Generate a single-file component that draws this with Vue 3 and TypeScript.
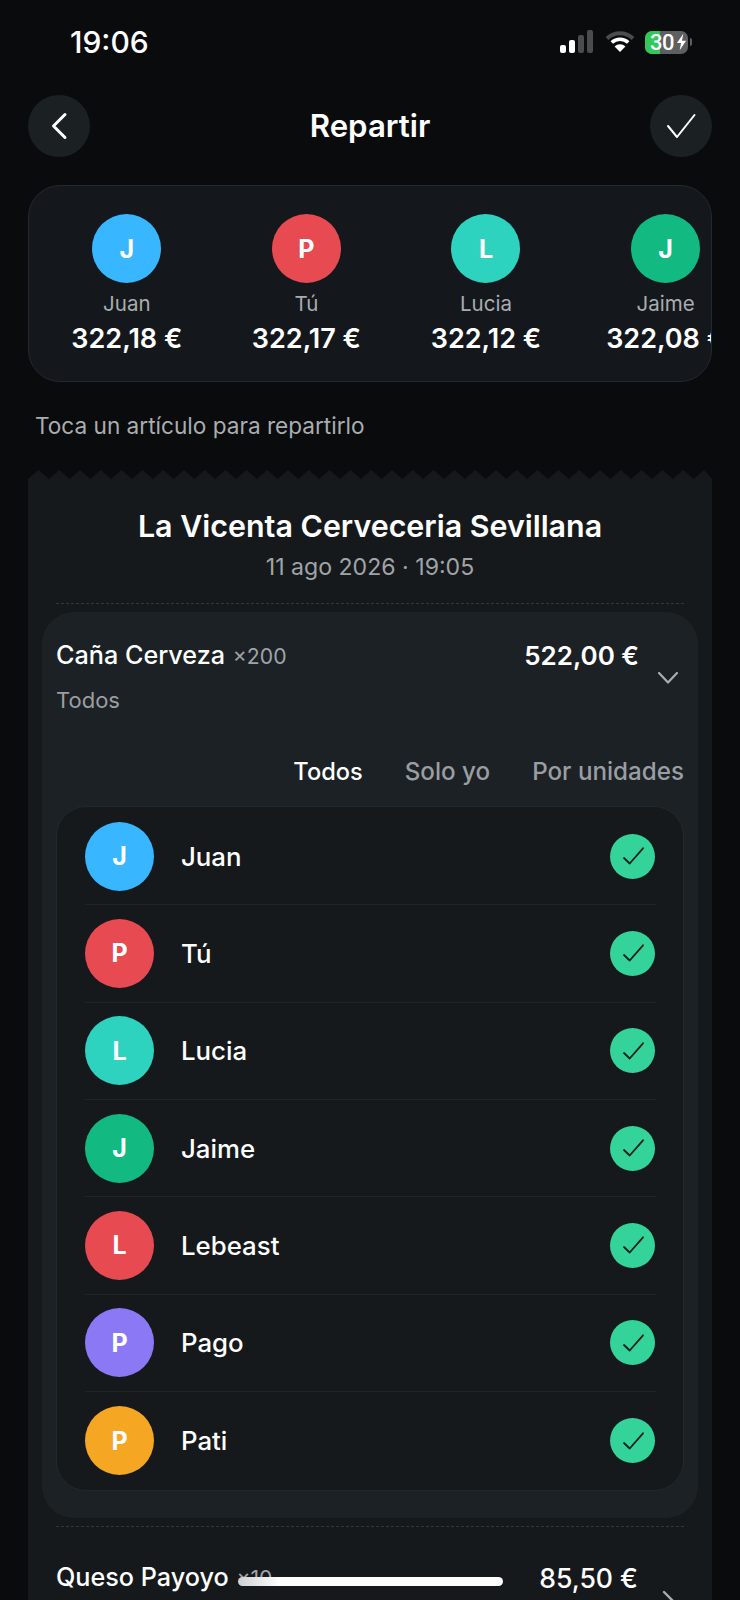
<script setup lang="ts">
interface Person { initial: string; name: string; color: string; amount: string }

const people: Person[] = [
  { initial: 'J', name: 'Juan', color: '#38b6ff', amount: '322,18 €' },
  { initial: 'P', name: 'Tú', color: '#e84a52', amount: '322,17 €' },
  { initial: 'L', name: 'Lucia', color: '#2ed3c0', amount: '322,12 €' },
  { initial: 'J', name: 'Jaime', color: '#12b981', amount: '322,08 €' },
  { initial: 'L', name: 'Lebeast', color: '#e84a52', amount: '322,05 €' },
  { initial: 'P', name: 'Pago', color: '#8b78f5', amount: '322,01 €' },
  { initial: 'P', name: 'Pati', color: '#f5a623', amount: '322,00 €' },
]

const period = 20.8
const zigzag = (() => {
  const pts: string[] = ['0,9']
  for (let x = 0; x < 684; x += period) {
    pts.push(`${(x + period / 2).toFixed(1)},0`)
    pts.push(`${Math.min(x + period, 684).toFixed(1)},9`)
  }
  pts.push('684,9')
  return pts.join(' ')
})()
</script>

<template>
  <div class="screen">
    <div class="status">
      <span class="time">19:06</span>
      <div class="status-icons">
        <svg width="34" height="24" viewBox="0 0 34 24">
          <rect x="0" y="15" width="6" height="8" rx="2" fill="#fff" />
          <rect x="9" y="10" width="6" height="13" rx="2" fill="#fff" />
          <rect x="18" y="5" width="6" height="18" rx="2" fill="#4a4c4d" />
          <rect x="27" y="0" width="6" height="23" rx="2" fill="#4a4c4d" />
        </svg>
        <svg class="wifi" width="30" height="24" viewBox="0 0 30 24">
          <path d="M2 8.5 A19 19 0 0 1 28 8.5" fill="none" stroke="#4a4c4d" stroke-width="4" />
          <path d="M6.8 12.5 A12 12 0 0 1 23.2 12.5" fill="none" stroke="#fff" stroke-width="3.6" />
          <path d="M15 22 L9.6 16.4 A7.6 7.6 0 0 1 20.4 16.4 Z" fill="#fff" />
        </svg>
        <div class="battery">
          <div class="battery-fill"></div>
          <span class="battery-text">30</span>
          <svg class="bolt" width="11" height="18" viewBox="0 0 12 18">
            <path d="M8 0 L1 10 H5.5 L4 18 L11 7.5 H6.5 Z" fill="#fff" />
          </svg>
        </div>
        <div class="battery-cap"></div>
      </div>
    </div>

    <header class="nav">
      <button class="round-btn" type="button" aria-label="Volver">
        <svg width="24" height="32" viewBox="0 0 24 32">
          <path d="M18 4.5 L6.5 16 L18 27.5" fill="none" stroke="#fff" stroke-width="3" stroke-linecap="round" stroke-linejoin="round" />
        </svg>
      </button>
      <h1 class="nav-title">Repartir</h1>
      <button class="round-btn" type="button" aria-label="Confirmar">
        <svg width="30" height="26" viewBox="0 0 30 26">
          <path d="M2 13 L11 24 L28.5 2" fill="none" stroke="#fff" stroke-width="2" stroke-linecap="round" stroke-linejoin="round" />
        </svg>
      </button>
    </header>

    <section class="totals">
      <div v-for="(p, i) in people.slice(0, 4)" :key="i" class="total">
        <div class="avatar" :style="{ background: p.color }">{{ p.initial }}</div>
        <span class="total-name">{{ p.name }}</span>
        <span class="total-amount">{{ p.amount }}</span>
      </div>
    </section>

    <p class="hint">Toca un artículo para repartirlo</p>

    <svg class="zigzag" width="684" height="9" viewBox="0 0 684 9">
      <polygon :points="zigzag" fill="#15191c" />
    </svg>
    <section class="receipt">
      <h2 class="shop">La Vicenta Cerveceria Sevillana</h2>
      <p class="date">11 ago 2026 · 19:05</p>
      <div class="dash"></div>

      <article class="item">
        <div class="item-head">
          <div class="item-main">
            <div class="item-line">
              <span class="item-name">Caña Cerveza <small class="qty">×200</small></span>
              <span class="item-price">522,00 €</span>
            </div>
            <span class="item-sub">Todos</span>
          </div>
          <svg class="chev" width="24" height="14" viewBox="0 0 24 14">
            <path d="M3 2 L12 11.5 L21 2" fill="none" stroke="#a9adb0" stroke-width="2.2" stroke-linecap="round" stroke-linejoin="round" />
          </svg>
        </div>

        <div class="tabs">
          <span class="tab active">Todos</span>
          <span class="tab">Solo yo</span>
          <span class="tab">Por unidades</span>
        </div>

        <ul class="list">
          <li v-for="(p, i) in people" :key="i" class="row">
            <div class="avatar" :style="{ background: p.color }">{{ p.initial }}</div>
            <span class="row-name">{{ p.name }}</span>
            <span class="check">
              <svg width="24" height="20" viewBox="0 0 24 20">
                <path d="M3 12 L8.7 17.5 L22 2.3" fill="none" stroke="#14201c" stroke-width="1.8" stroke-linecap="round" stroke-linejoin="round" />
              </svg>
            </span>
          </li>
        </ul>
      </article>

      <div class="dash second"></div>

      <article class="item-closed">
        <div class="item-line">
          <span class="item-name">Queso Payoyo <small class="qty">×10</small></span>
          <span class="item-price regular">85,50 €</span>
        </div>
        <svg class="chev-right" width="16" height="26" viewBox="0 0 16 26">
          <path d="M2 2 L13 13 L2 24" fill="none" stroke="#a9adb0" stroke-width="2.4" stroke-linecap="round" stroke-linejoin="round" />
        </svg>
      </article>
    </section>

    <div class="home-indicator"></div>
  </div>
</template>

<style>
html, body { margin: 0; background: #090b0c; }
</style>

<style scoped>
.screen {
  position: relative;
  width: 740px;
  height: 1600px;
  overflow: hidden;
  background: #090b0c;
  color: #fff;
  font-family: Inter, "Noto Sans", sans-serif;
  box-sizing: border-box;
}
.status {
  height: 95px;
  padding: 24px 48px 0 70px;
  box-sizing: border-box;
  display: flex;
  justify-content: space-between;
  align-items: flex-start;
}
.time { font-size: 30px; line-height: 36px; font-weight: 500; }
.status-icons { display: flex; align-items: center; gap: 0; height: 36px; }
.wifi { margin-left: 11px; }
.battery {
  position: relative;
  margin-left: 10px;
  width: 43px;
  height: 23px;
  background: #5e5f60;
  border-radius: 7px;
  overflow: hidden;
  display: flex;
  align-items: center;
}
.battery-fill { position: absolute; left: 0; top: 0; bottom: 0; width: 15px; background: #34c759; }
.battery-text { position: relative; margin-left: 5px; font-family: Roboto, sans-serif; font-size: 22px; line-height: 23px; font-weight: 500; letter-spacing: -0.5px; }
.bolt { position: relative; margin-left: 2px; }
.battery-cap { width: 2px; height: 8px; margin-left: 2px; background: #5e5f60; border-radius: 0 2px 2px 0; }

.nav {
  display: flex;
  justify-content: space-between;
  align-items: center;
  padding: 0 28px;
  height: 62px;
}
.round-btn {
  width: 62px;
  height: 62px;
  border: 0;
  border-radius: 50%;
  background: #1b2023;
  display: flex;
  align-items: center;
  justify-content: center;
  padding: 0;
}
.nav-title { margin: 0; font-size: 31.2px; font-weight: 600; line-height: 36px; }

.totals {
  margin: 28px 28px 0;
  height: 197px;
  box-sizing: border-box;
  border: 1px solid #25292d;
  border-radius: 32px;
  background: #14181c;
  overflow: hidden;
  display: flex;
  padding: 28px 0 0 8px;
}
.total {
  flex: 0 0 179.6px;
  display: flex;
  flex-direction: column;
  align-items: center;
  white-space: nowrap;
}
.avatar {
  flex: 0 0 auto;
  width: 69px;
  height: 69px;
  border-radius: 50%;
  display: flex;
  align-items: center;
  justify-content: center;
  font-size: 25px;
  font-weight: 700;
  color: #fff;
}
.total-name { margin-top: 8px; font-size: 20.5px; line-height: 26px; color: #a9adb0; }
.total-amount { margin-top: 6px; font-size: 27px; line-height: 32px; font-weight: 600; }

.hint {
  margin: 29px 0 0 35px;
  font-size: 22.6px;
  line-height: 30px;
  color: #a9adb0;
}
.zigzag { display: block; margin: 29px 0 0 28px; }
.receipt {
  margin: 0 28px;
  padding: 28px 14px 0;
  background: #15191c;
  height: 1200px;
  box-sizing: border-box;
}
.shop { margin: 0; text-align: center; font-size: 30.4px; line-height: 38px; font-weight: 600; }
.date { margin: 7px 0 0; text-align: center; font-size: 23.1px; line-height: 30px; color: #a0a4a8; }
.dash {
  margin: 21px 14px 0;
  height: 0;
  border-top: 1px dashed #32373b;
}
.dash.second { margin-top: 8px; }
.item {
  margin-top: 8px;
  height: 906px;
  box-sizing: border-box;
  background: #1c2125;
  border-radius: 32px;
  padding: 28px 14px 0;
}
.item-head { display: flex; align-items: center; gap: 17px; }
.item-main { flex: 1; display: flex; flex-direction: column; }
.item-line { display: flex; justify-content: space-between; align-items: center; }
.item-name { font-size: 25.2px; line-height: 30px; font-weight: 500; white-space: nowrap; }
.qty { font-size: 21.2px; font-weight: 400; color: #a0a4a8; margin-left: 1px; }
.item-price { font-size: 26px; line-height: 30px; font-weight: 600; }
.item-price.regular { font-weight: 500; font-size: 26.6px; }
.item-sub { margin-top: 14px; font-size: 22px; line-height: 30px; color: #9a9ea2; }
.chev { flex: 0 0 auto; margin-right: 4px; }
.tabs {
  margin-top: 42px;
  display: flex;
  justify-content: flex-end;
  gap: 42px;
}
.tab { font-size: 24.2px; line-height: 30px; font-weight: 500; color: #9a9ea2; }
.tab.active { color: #fff; font-size: 23.6px; }
.list {
  list-style: none;
  margin: 19px 0 0;
  padding: 1px 27px 0 28px;
  height: 685px;
  box-sizing: border-box;
  border: 1px solid #23282c;
  border-radius: 30px;
  background: #15191c;
}
.row {
  height: 97.33px;
  box-sizing: border-box;
  display: flex;
  align-items: center;
  border-bottom: 1px solid #1f2428;
}
.row:last-child { border-bottom: 0; }
.row-name { margin-left: 27px; flex: 1; font-size: 25.8px; font-weight: 500; }
.check {
  width: 45px;
  height: 45px;
  border-radius: 50%;
  background: #34d399;
  display: flex;
  align-items: center;
  justify-content: center;
  margin-right: 1px;
}
.item-closed {
  margin-top: 35px;
  padding: 0 14px;
  position: relative;
  display: flex;
  flex-direction: column;
}
.item-closed .item-line { margin-right: 46px; }
.chev-right { position: absolute; right: 20px; top: 28px; }
.home-indicator {
  position: absolute;
  left: 238px;
  top: 1577px;
  width: 265px;
  height: 9px;
  background: linear-gradient(90deg, #cfd0d1, #fff 16%);
  border-radius: 5px;
}
</style>
